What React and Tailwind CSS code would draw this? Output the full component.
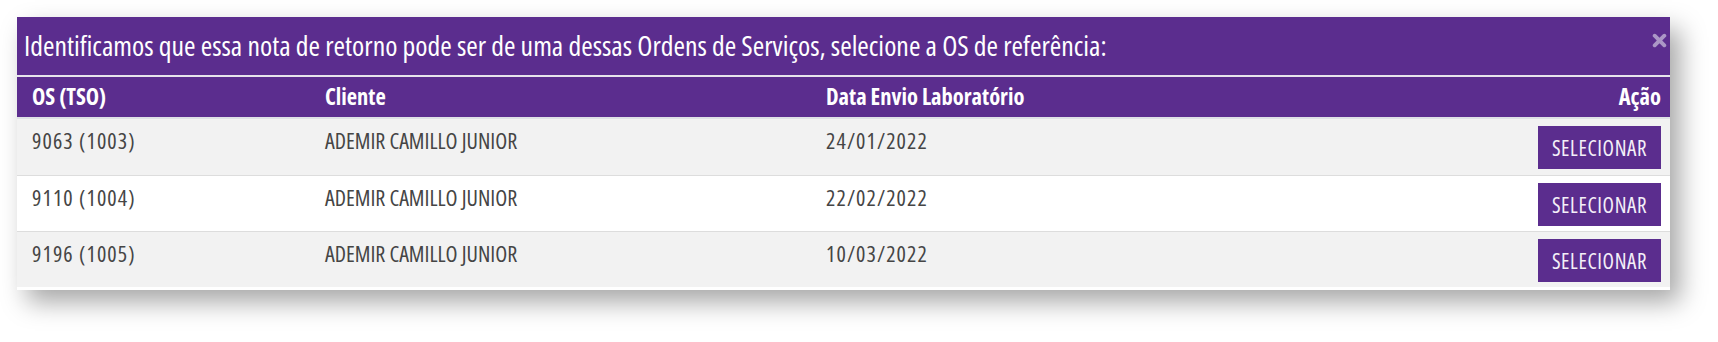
import React from "react";

const rows = [
  { os: "9063 (1003)", cliente: "ADEMIR CAMILLO JUNIOR", data: "24/01/2022" },
  { os: "9110 (1004)", cliente: "ADEMIR CAMILLO JUNIOR", data: "22/02/2022" },
  { os: "9196 (1005)", cliente: "ADEMIR CAMILLO JUNIOR", data: "10/03/2022" },
];

const font = { fontFamily: '"Open Sans", "DejaVu Sans Condensed", sans-serif' };

const CloseIcon = () => (
  <svg width="15" height="15" viewBox="0 0 14 14" className="text-[#ab97c6]">
    <path
      d="M2.5 2.5 L11.5 11.5 M11.5 2.5 L2.5 11.5"
      stroke="currentColor"
      strokeWidth="3.6"
      strokeLinecap="round"
    />
  </svg>
);

export default function App() {
  return (
    <div className="h-[342px] bg-white pt-[17px] pl-[17px] [font-stretch:75%]" style={font}>
      <div className="w-[1653px] bg-white pb-[3px] shadow-[10px_12px_24px_rgba(0,0,0,0.35)]">
        {/* --- TITLE --- */}
        <div className="flex h-[58px] items-center justify-between bg-[#5b2d8e] pl-[7px] pr-[3px]">
          <h4 className="text-[27.8px] leading-none text-white">
            Identificamos que essa nota de retorno pode ser de uma dessas Ordens de Serviços, selecione a OS de referência:
          </h4>
          <button className="-mt-[12px] flex h-[16px] w-[16px] items-center justify-center">
            <CloseIcon />
          </button>
        </div>
        <div className="h-[2px] bg-[#e7e4ec]" />

        {/* --- TABLE --- */}
        <div className="grid h-[42px] grid-cols-[293px_501px_1fr_200px] items-center border-b-2 border-[#dfe1e6] bg-[#5b2d8e] text-[22.5px] font-bold text-white">
          <div className="pl-[15px]">OS (TSO)</div>
          <div className="pl-[15px]">Cliente</div>
          <div className="pl-[15px]">Data Envio Laboratório</div>
          <div className="pr-[9px] text-right">Ação</div>
        </div>

        {rows.map((row, i) => (
          <div
            key={row.os}
            className={`grid h-[56px] grid-cols-[293px_501px_1fr_200px] text-[22px] leading-[30px] text-[#454545] ${
              i > 0 ? "border-t border-[#dddddd]" : ""
            } ${i % 2 === 0 ? "bg-[#f2f2f2]" : "bg-white"}`}
          >
            <div className="pl-[15px] pt-[6px] tracking-[1.1px]">{row.os}</div>
            <div className="pl-[15px] pt-[6px]">{row.cliente}</div>
            <div className="pl-[15px] pt-[6px] tracking-[1.1px]">{row.data}</div>
            <div className="flex justify-end pr-[9px] pt-[7px]">
              <button className="h-[43px] w-[123px] bg-[#5b2d8e] text-[21px] font-medium tracking-[0.6px] text-[#f4eff8]">
                SELECIONAR
              </button>
            </div>
          </div>
        ))}
      </div>
    </div>
  );
}
